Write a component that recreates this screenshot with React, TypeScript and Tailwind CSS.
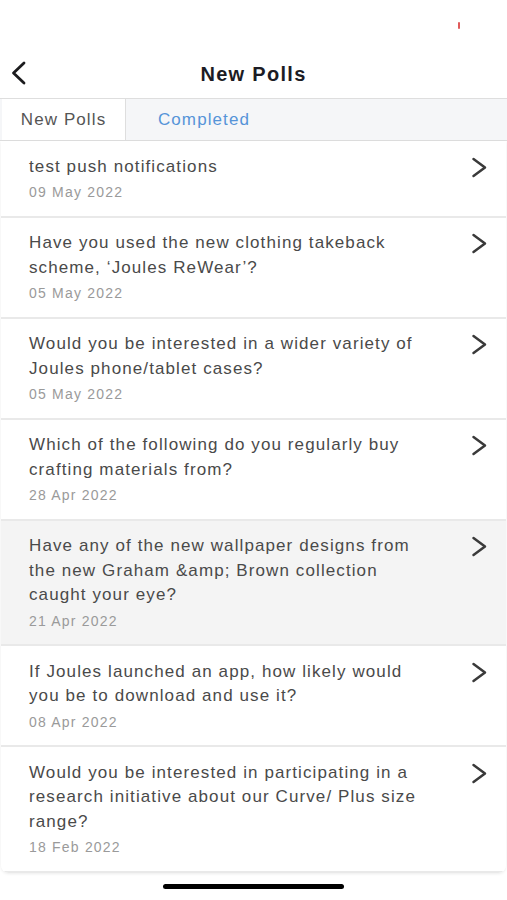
type Poll = {
  title: string
  date: string
  highlighted?: boolean
}

const polls: Poll[] = [
  { title: 'test push notifications', date: '09 May 2022' },
  { title: 'Have you used the new clothing takeback scheme, ‘Joules ReWear’?', date: '05 May 2022' },
  { title: 'Would you be interested in a wider variety of Joules phone/tablet cases?', date: '05 May 2022' },
  { title: 'Which of the following do you regularly buy crafting materials from?', date: '28 Apr 2022' },
  {
    title: 'Have any of the new wallpaper designs from the new Graham &amp; Brown collection caught your eye?',
    date: '21 Apr 2022',
    highlighted: true,
  },
  { title: 'If Joules launched an app, how likely would you be to download and use it?', date: '08 Apr 2022' },
  {
    title: 'Would you be interested in participating in a research initiative about our Curve/ Plus size range?',
    date: '18 Feb 2022',
  },
]

function Chevron({ dir }: { dir: 'left' | 'right' }) {
  if (dir === 'left') {
    return (
      <svg width="18" height="24" viewBox="0 0 18 24" fill="none">
        <polyline points="14,2 3.5,12 14,22" stroke="#1c1c1e" strokeWidth="2.8" strokeLinecap="round" strokeLinejoin="round" />
      </svg>
    )
  }
  return (
    <svg width="17" height="21" viewBox="0 0 17 21" fill="none">
      <polyline points="2.5,2 14,10.5 2.5,19" stroke="#3a3a3a" strokeWidth="2.5" strokeLinecap="round" strokeLinejoin="round" />
    </svg>
  )
}

function PollRow({ poll }: { poll: Poll }) {
  return (
    <button
      className={`w-full flex items-start justify-between text-left border-b-2 border-[#e9e9e9] pl-[28px] pr-[18px] pt-[13.5px] pb-[13.5px] ${
        poll.highlighted ? 'bg-[#f4f4f4]' : 'bg-white'
      }`}
    >
      <div className="w-[400px]">
        <p className="text-[17px] leading-[24.5px] tracking-[1.1px] text-[#4a4a4a]">{poll.title}</p>
        <p className="mt-[3px] text-[14px] leading-[20px] tracking-[1.2px] text-[#9a9a9a]">{poll.date}</p>
      </div>
      <div className="mt-[2px]">
        <Chevron dir="right" />
      </div>
    </button>
  )
}

export default function App() {
  return (
    <div className="w-[507px] h-[900px] bg-white flex flex-col" style={{ fontFamily: '"Liberation Sans", Arial, sans-serif' }}>
      {/* Status bar */}
      <div className="h-[49px] flex justify-end pr-[47px] pt-[22px]">
        <div className="w-[2px] h-[7px] bg-[#e05a5a] rounded-sm" />
      </div>

      {/* Header */}
      <div className="h-[49px] relative flex items-center justify-center">
        <button className="absolute left-[10px] top-[12px]">
          <Chevron dir="left" />
        </button>
        <h1 className="text-[20px] font-bold text-[#1c1c24] tracking-[1.3px]">New Polls</h1>
      </div>

      {/* Tabs */}
      <div className="flex h-[43px] bg-[#f5f6f8] border-t border-b border-[#dedede]">
        <div className="ml-[2px] w-[124px] bg-white border-r border-[#dedede] flex items-center justify-center">
          <span className="text-[17px] tracking-[1.1px] text-[#555555]">New Polls</span>
        </div>
        <div className="w-[156px] flex items-center justify-center">
          <span className="text-[17px] tracking-[1.1px] text-[#5594d8]">Completed</span>
        </div>
      </div>

      {/* Poll list */}
      <div className="mx-[1px] rounded-b-lg shadow-[0_1px_3px_rgba(0,0,0,0.08)] overflow-hidden">
        {polls.map((poll, i) => (
          <PollRow key={i} poll={poll} />
        ))}
      </div>

      {/* Home indicator */}
      <div className="flex-1 flex items-end justify-center pb-[11px]">
        <div className="w-[181px] h-[5px] rounded-full bg-black" />
      </div>
    </div>
  )
}
